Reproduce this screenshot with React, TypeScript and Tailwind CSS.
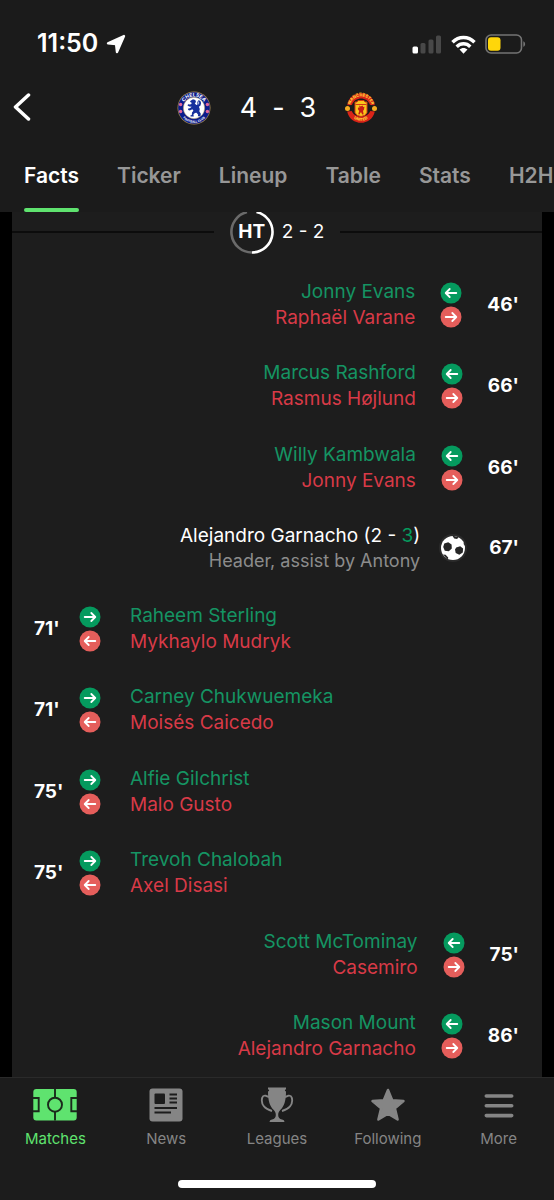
import { useState } from 'react';

type Side = 'home' | 'away';

type MatchEvent = {
    minute: number;
    side: Side;
    type: 'sub' | 'goal';
    playerIn: string;
    playerOut?: string;
    detail?: string;
};

const tabs = ['Facts', 'Ticker', 'Lineup', 'Table', 'Stats', 'H2H'];

const events: MatchEvent[] = [
    { minute: 46, side: 'away', type: 'sub', playerIn: 'Jonny Evans', playerOut: 'Raphaël Varane' },
    { minute: 66, side: 'away', type: 'sub', playerIn: 'Marcus Rashford', playerOut: 'Rasmus Højlund' },
    { minute: 66, side: 'away', type: 'sub', playerIn: 'Willy Kambwala', playerOut: 'Jonny Evans' },
    { minute: 67, side: 'away', type: 'goal', playerIn: 'Alejandro Garnacho', detail: 'Header, assist by Antony' },
    { minute: 71, side: 'home', type: 'sub', playerIn: 'Raheem Sterling', playerOut: 'Mykhaylo Mudryk' },
    { minute: 71, side: 'home', type: 'sub', playerIn: 'Carney Chukwuemeka', playerOut: 'Moisés Caicedo' },
    { minute: 75, side: 'home', type: 'sub', playerIn: 'Alfie Gilchrist', playerOut: 'Malo Gusto' },
    { minute: 75, side: 'home', type: 'sub', playerIn: 'Trevoh Chalobah', playerOut: 'Axel Disasi' },
    { minute: 75, side: 'away', type: 'sub', playerIn: 'Scott McTominay', playerOut: 'Casemiro' },
    { minute: 86, side: 'away', type: 'sub', playerIn: 'Mason Mount', playerOut: 'Alejandro Garnacho' },
];

const StatusBar = () => (
    <div className="flex h-[88px] items-center justify-between pl-[37px] pr-7">
        <div className="flex items-center gap-2">
            <span className="text-[25px] font-semibold">11:50</span>
            <svg width="20" height="20" viewBox="0 0 20 20" fill="#fff">
                <path
                    d="M18 2 2 9.300l7.800.8c.2 0 .3.100.3.300L11 18z"
                    stroke="#fff"
                    strokeWidth="2.400"
                    strokeLinejoin="round"
                />
            </svg>
        </div>
        <div className="flex items-center gap-[9px]">
            <svg width="30" height="19" viewBox="0 0 30 19">
                <rect x="0.500" y="11.500" width="5.500" height="7" rx="1.500" fill="#fff" />
                <rect x="8.500" y="8" width="5" height="10.500" rx="1.500" fill="#484848" />
                <rect x="16.500" y="4.500" width="5" height="14" rx="1.500" fill="#484848" />
                <rect x="24" y="0.500" width="5" height="18" rx="1.500" fill="#484848" />
            </svg>
            <svg width="25" height="19" viewBox="0 0 25 19" fill="none" stroke="#fff" strokeWidth="3.400">
                <path d="M1.500 7.300C7.700.9 17.300.9 23.500 7.300" />
                <path d="M5.700 11.700c3.900-3.900 9.700-3.900 13.600 0" />
                <path d="M12.500 18.700 8.500 14.600c2.200-2.100 5.800-2.100 8 0z" fill="#fff" stroke="none" />
            </svg>
            <svg width="41" height="20" viewBox="0 0 41 20">
                <rect x="1" y="1" width="35.500" height="18" rx="5" fill="none" stroke="#747474" strokeWidth="1.600" />
                <rect x="3" y="3.300" width="12.500" height="13.400" rx="3" fill="#ffd60a" />
                <path d="M38.300 7.200c2.400.8 2.400 4.800 0 5.600z" fill="#747474" />
            </svg>
        </div>
    </div>
);

const ChelseaCrest = () => (
    <svg width="34" height="34" viewBox="0 0 34 34" role="img" aria-label="Chelsea">
        <defs>
            <path id="cfc-top" d="M5.500 17a11.500 11.500 0 0 1 23 0" />
            <path id="cfc-bottom" d="M2.200 17a14.800 14.800 0 0 0 29.600 0" />
        </defs>
        <circle cx="17" cy="17" r="16.500" fill="#a58a55" />
        <circle cx="17" cy="17" r="15.800" fill="#0b1c8c" />
        <circle cx="17" cy="17" r="10.700" fill="#fff" stroke="#a58a55" strokeWidth="0.500" />
        <g fill="#fff" fontFamily="Inter, sans-serif" fontWeight="700" textAnchor="middle">
            <text fontSize="5"><textPath href="#cfc-top" startOffset="50%">CHELSEA</textPath></text>
            <text fontSize="3"><textPath href="#cfc-bottom" startOffset="50%">FOOTBALL CLUB</textPath></text>
        </g>
        <g fill="#e0679b">
            <circle cx="3.600" cy="13.500" r="1.700" />
            <circle cx="3.600" cy="20.500" r="1.700" />
            <circle cx="30.400" cy="13.500" r="1.700" />
            <circle cx="30.400" cy="20.500" r="1.700" />
        </g>
        <path
            d="M14 9.500l2-1.200 2.300.7.700 1.900-1.200 1.400 1.400 1.600 2.800-.6.200-1.700-1-1 .2-1.600 2 1 .7 2-.6 2.600-1.600 1.200.9 2.100-.5 2.300 1.500 2.600-.4 2.400h-2.600l.4-1.500-1.700-2-1.600.3-1.500 1.500.4 2h-3.200l-.3-1 1.500-.6.200-2.400 1.400-1.800-1-1.500-2.600 1.300-1.700-.6.100-1.300 1.700-.3 1.800-1.500-2.500-.2-1.700-1.100.6-1.200 1.800.3 1.600-.5-.1-1.600-1.300-.6.200-1z"
            fill="#17309c"
        />
        <path d="M20.800 10.500l.3 5-1.800 1.200M15.300 14.500l1.800 1.600" fill="none" stroke="#17309c" strokeWidth="1" />
    </svg>
);

const UnitedCrest = () => (
    <svg width="32" height="32" viewBox="0 0 32 32" role="img" aria-label="Manchester United">
        <defs>
            <path id="mu-top" d="M5 15.500a11 11 0 0 1 22 0" />
            <path id="mu-bottom" d="M3.800 19.500c4.500 12.500 19.900 12.500 24.400 0" />
        </defs>
        <path d="M4 11C7-2 25-2 28 11" fill="none" stroke="#e8b321" strokeWidth="1.300" strokeDasharray="2.500 1.200" />
        <path d="M2.200 13.200C4.500-2.600 27.500-2.600 29.800 13.200l-4.800-.2C22.500 4.400 9.500 4.400 7 13z" fill="#da2418" />
        <path d="M2.200 19.500C5.500 34.600 26.500 34.600 29.800 19.500l-4.500-.5c-3 7.500-15.600 7.500-18.600 0z" fill="#da2418" />
        <circle cx="2.500" cy="16.500" r="2.500" fill="#f6ae22" />
        <circle cx="29.500" cy="16.500" r="2.500" fill="#f6ae22" />
        <path d="M10 10h2l1-1.500h6L20 10h2v10.500q-1 3.500-6 4-5-.5-6-4z" fill="#f9c51c" stroke="#d43a14" strokeWidth="1" />
        <path d="M10.500 12.500h11" stroke="#d43a14" strokeWidth="1" />
        <path d="M14.300 13.500l1.500 1 1.700-1 .7 1.500 1.300-.3-.6 3-.9 1.200.6 3.300-1.500.4-.7-2.200-1 .2-.8 2-1.400-.4 1-3.300-1.400-2 .6-1.600 1 .7z" fill="#c81c15" />
        <g fill="#ffd33a" fontFamily="Inter, sans-serif" fontWeight="800" textAnchor="middle">
            <text fontSize="4"><textPath href="#mu-top" startOffset="50%">MANCHESTER</textPath></text>
            <text fontSize="4"><textPath href="#mu-bottom" startOffset="50%">UNITED</textPath></text>
        </g>
    </svg>
);

const SubArrow = ({ direction, color }: { direction: 'left' | 'right'; color: string }) => (
    <svg width="22" height="22" viewBox="0 0 22 22">
        <circle cx="11" cy="11" r="10.500" fill={color} />
        <path
            d={direction === 'left' ? 'M16.300 11H6M9.700 7 5.700 11l4 4' : 'M5.700 11H16M12.300 7l4 4-4 4'}
            fill="none"
            stroke="#fff"
            strokeWidth="1.800"
            strokeLinecap="round"
            strokeLinejoin="round"
        />
    </svg>
);

const Football = () => (
    <svg width="28" height="28" viewBox="0 0 28 28" role="img" aria-label="Goal">
        <circle cx="14" cy="14" r="14" fill="#2b2b2b" />
        <circle cx="14" cy="14" r="12" fill="#fff" />
        <path
            d="M5.300 9.500l3.900-1.300 3.400 2.300.2 4-3 2.800-4-.6-1.600-3.700zM17.200 13.500l4-1.300 2.900 2.200-.3 4.200-3.500 2.100-3.600-1.800-.7-3.400zM13.200 1.500l6.300 1.700-1.400 1.900-2.900-.6zM4 20.500l2.600.2 2.600 2.700-.2 2.200zM25.200 7.500l1 4.500-1.600-2z"
            fill="#262626"
        />
    </svg>
);

const SubIcons = ({ side }: { side: Side }) => (
    <div className="flex flex-col gap-[2px]">
        <SubArrow direction={side === 'home' ? 'right' : 'left'} color="#059a5e" />
        <SubArrow direction={side === 'home' ? 'left' : 'right'} color="#e55e5b" />
    </div>
);

const EventRow = ({ event }: { event: MatchEvent }) => {
    const home = event.side === 'home';

    if (event.type === 'goal') {
        return (
            <li className="flex flex-1 items-center justify-end pr-[23px]">
                <div className="text-right">
                    <p className="text-[19px] leading-[26px]">
                        {event.playerIn} (2 - <span className="text-[#059a5e]">3</span>)
                    </p>
                    <p className="text-lg leading-6 text-[#8c8c8c]">{event.detail}</p>
                </div>
                <div className="ml-[19px] mr-[22px]">
                    <Football />
                </div>
                <span className="text-[19px] font-bold">{event.minute}'</span>
            </li>
        );
    }

    return (
        <li className={home ? 'flex flex-1 items-center pl-[22px]' : 'flex flex-1 flex-row-reverse items-center pr-[23px]'}>
            <span className={home ? 'w-[45px] text-[19px] font-bold' : 'text-[19px] font-bold'}>{event.minute}'</span>
            <div className={home ? 'mr-[29px]' : 'mx-[25px]'}>
                <SubIcons side={event.side} />
            </div>
            <div className={home ? 'text-[19px] leading-[26px]' : 'text-right text-[19px] leading-[26px]'}>
                <p className="text-[#159463]">{event.playerIn}</p>
                <p className="text-[#d83a47]">{event.playerOut}</p>
            </div>
        </li>
    );
};

const HalfTime = () => (
    <div className="h-[52px] overflow-hidden">
        <div className="-mt-[2px] flex h-11 items-center gap-4">
            <div className="h-[2px] flex-1 bg-[#0c0c0c]" />
            <div className="flex items-center gap-2">
                <div className="relative flex size-11 items-center justify-center">
                    <svg className="absolute inset-0" width="44" height="44" viewBox="0 0 44 44" fill="none" strokeWidth="2.600">
                        <path d="M17 2.100a20.500 20.500 0 0 0 5 40.400" stroke="#6a6a6a" />
                        <path d="M26.500 2a20.500 20.500 0 0 1-4.500 40.500" stroke="#fff" />
                    </svg>
                    <span className="text-[19px] font-bold">HT</span>
                </div>
                <span className="text-[19px]">2 - 2</span>
            </div>
            <div className="h-[2px] flex-1 bg-[#0c0c0c]" />
        </div>
    </div>
);

const MatchesIcon = () => (
    <svg width="44" height="34" viewBox="0 0 44 34">
        <rect x="0.300" y="1" width="43.400" height="31.500" rx="3" fill="#5fe36f" />
        <g fill="none" stroke="#1b2a1c" strokeWidth="1.900">
            <path d="M22 1v8.500M22 24v8.500M0 10h5.700v13.300H0M44 10h-5.700v13.300H44" />
            <circle cx="22" cy="16.700" r="7" />
        </g>
    </svg>
);

const NewsIcon = () => (
    <svg width="34" height="34" viewBox="0 0 34 34">
        <rect x="0.500" y="0.500" width="33" height="33" rx="3" fill="#858585" />
        <rect x="5.500" y="5.500" width="10.500" height="10.500" rx="1" fill="#1c1c1c" />
        <path d="M20.500 6.500h7.500M20.500 10.500h7.500M20.500 14.500h7.500M5.500 20h22.500M5.500 24.500h16.500" stroke="#1c1c1c" strokeWidth="1.900" />
    </svg>
);

const TrophyIcon = () => (
    <svg width="34" height="36" viewBox="0 0 34 36">
        <path
            d="M8 .5h18v1.700c-1.500.6-1.500 1.700 0 2.300C26 14 24 19.500 20.500 22.700c-1.700 1.500-2.300 3.300-2.300 5.300 0 2.500 1.300 4.200 3.800 4.600q2.500.3 2.500 2.400H9.500q0-2.100 2.500-2.400c2.500-.4 3.800-2.100 3.800-4.600 0-2-.6-3.800-2.300-5.300C10 19.500 8 14 8 4.500c1.500-.6 1.500-1.700 0-2.300z"
            fill="#858585"
        />
        <path
            d="M9 10 6 8.800q-3-.7-3.800 2C.5 17.500 5 22 12 24M25 10l3-1.200q3-.7 3.800 2C33.500 17.500 29 22 22 24"
            fill="none"
            stroke="#858585"
            strokeWidth="1.900"
        />
    </svg>
);

const StarIcon = () => (
    <svg width="36" height="36" viewBox="0 0 36 36">
        <path
            d="M18 3l4.200 10.200 11.300.8-8.600 7.200 2.700 11.300L18 26.700l-9.600 5.800 2.700-11.300L2.500 14l11.300-.8z"
            fill="#858585"
            stroke="#858585"
            strokeWidth="2.500"
            strokeLinejoin="round"
        />
    </svg>
);

const MoreIcon = () => (
    <svg width="30" height="34" viewBox="0 0 30 34" stroke="#858585" strokeWidth="3.600" strokeLinecap="round">
        <path d="M2.300 8h25.400M2.300 17.800h25.400M2.300 27.600h25.400" />
    </svg>
);

const navItems = [
    { label: 'Matches', icon: <MatchesIcon />, active: true },
    { label: 'News', icon: <NewsIcon /> },
    { label: 'Leagues', icon: <TrophyIcon /> },
    { label: 'Following', icon: <StarIcon /> },
    { label: 'More', icon: <MoreIcon /> },
];

const BottomNav = () => (
    <footer className="border-t border-[#2a2a2a] bg-[#1c1c1c]">
        <nav className="grid grid-cols-5 pt-[9px]">
            {navItems.map((item) => (
                <a
                    key={item.label}
                    href={`#${item.label.toLowerCase()}`}
                    className={
                        item.active
                            ? 'flex flex-col items-center gap-[6px] text-[15px] leading-5 text-[#5fe36f]'
                            : 'flex flex-col items-center gap-[6px] text-[15px] leading-5 text-[#858585]'
                    }
                >
                    <span className="flex h-9 items-center">{item.icon}</span>
                    {item.label}
                </a>
            ))}
        </nav>
        <div className="flex justify-center pb-3 pt-[31px]">
            <div className="h-2 w-[198px] rounded-full bg-white" />
        </div>
    </footer>
);

const App = () => {
    const [activeTab, setActiveTab] = useState<string>('Facts');

    return (
        <div className="flex min-h-screen flex-col overflow-hidden bg-black font-['Inter',sans-serif] text-white">
            <header className="bg-[#1b1b1b]">
                <StatusBar />
                <div className="grid h-[38px] grid-cols-[1fr_auto_1fr] items-center px-3">
                    <button type="button" aria-label="Back" className="w-5">
                        <svg width="20" height="30" viewBox="0 0 20 30" fill="none" stroke="#fff" strokeWidth="3.500" strokeLinecap="round" strokeLinejoin="round">
                            <path d="M16.500 2 3.500 14l13 12" />
                        </svg>
                    </button>
                    <div className="flex items-center gap-[29px]">
                        <ChelseaCrest />
                        <h1 className="flex gap-[15px] text-[27px]">
                            <span>4</span>
                            <span>-</span>
                            <span>3</span>
                        </h1>
                        <UnitedCrest />
                    </div>
                </div>
                <nav className="flex h-[86px] items-end gap-[38px] overflow-hidden pl-6">
                    {tabs.map((tab) => (
                        <button
                            key={tab}
                            type="button"
                            onClick={() => setActiveTab(tab)}
                            className={
                                tab === activeTab
                                    ? 'flex shrink-0 flex-col text-[21px] leading-7 font-semibold text-white'
                                    : 'flex shrink-0 flex-col text-[21px] leading-7 font-semibold text-[#979797]'
                            }
                        >
                            {tab}
                            <span className={tab === activeTab ? 'mt-[18px] h-1 w-full rounded-full bg-[#5fe36f]' : 'mt-[18px] h-1 w-full'} />
                        </button>
                    ))}
                </nav>
            </header>
            <main className="mx-3 flex flex-1 flex-col bg-[#1d1d1d]">
                <HalfTime />
                <ul className="flex flex-1 flex-col">
                    {events.map((event, index) => (
                        <EventRow key={index} event={event} />
                    ))}
                </ul>
            </main>
            <BottomNav />
        </div>
    );
};

export default App;
